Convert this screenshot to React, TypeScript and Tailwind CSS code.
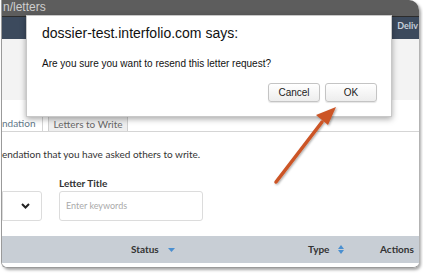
export default function App() {
  return (
    <div className="relative w-[423px] h-[274px] bg-white overflow-hidden font-['Lato',sans-serif]">
      {/* screenshot frame */}
      <div className="ml-[1px] w-[418px] h-[268px] flex flex-col overflow-hidden rounded-tr-[10px] rounded-b-[6px] border-l border-b border-[#9a9a9a] shadow-[2px_2px_3px_rgba(0,0,0,0.35)]">
        <div className="h-[16px] bg-[#5d5d5d] shrink-0 px-[1px] text-[12px] leading-[14px] text-[#cfcfcf] font-['Liberation_Sans',sans-serif]">
          n/letters
        </div>
        <div className="h-[23px] bg-[#3c4a5d] shrink-0 flex justify-end items-start pt-[2px] pr-[1px] border-t border-[#2c2c2c]">
          <span className="text-[9px] font-bold text-[#c8d0dc]">Deliv</span>
        </div>
        <div className="h-[61px] bg-[#f3f3f3] shrink-0" />
        <div className="h-[16px] bg-white shrink-0" />
        {/* tabs */}
        <div className="h-[16px] shrink-0 flex items-end border-b border-[#d5d5d5] text-[10px]">
          <div className="w-[41px] h-full bg-white border-r border-[#d5d5d5] flex items-center text-[#5f7888]">
            ndation
          </div>
          <div className="ml-[5px] w-[80px] h-full bg-[#eeeeee] border border-b-0 border-[#cfcfcf] flex items-center justify-center text-[#666]">
            Letters to Write
          </div>
        </div>
        <div className="h-[16px] shrink-0" />
        <div className="text-[10px] leading-[12px] text-[#333] h-[28px] shrink-0">
          endation that you have asked others to write.
        </div>
        <div className="flex gap-[17px] shrink-0">
          <div className="w-[40px] pt-[15px]">
            <div className="h-[30px] bg-white border border-[#dcdcdc] rounded-r-[3px] flex items-center justify-end pr-[11px]">
              <svg width="9" height="6" viewBox="0 0 9 6">
                <path d="M1 1l3.5 3.5L8 1" fill="none" stroke="#222" strokeWidth="2" />
              </svg>
            </div>
          </div>
          <div className="w-[144px]">
            <div className="h-[15px] text-[10px] font-bold text-[#333] leading-[12px] pt-[1px]">Letter Title</div>
            <div className="h-[30px] bg-white border border-[#dcdcdc] rounded-[3px] flex items-center pl-[6px] text-[9px] text-[#aaa]">
              Enter keywords
            </div>
          </div>
        </div>
        <div className="h-[15px] shrink-0" />
        <div className="h-[27px] shrink-0 bg-[#c8ced5] flex items-center pl-[129px] text-[10px] font-bold text-[#333]">
          <div className="w-[177px] flex items-center gap-[9px]">
            Status
            <svg width="7" height="4" viewBox="0 0 7 4">
              <path d="M0 0h7L3.5 4z" fill="#4a8fd0" />
            </svg>
          </div>
          <div className="w-[72px] flex items-center gap-[9px]">
            Type
            <svg width="6" height="9" viewBox="0 0 6 9">
              <path d="M0 4L3 0l3 4zM0 5l3 4 3-4z" fill="#4a8fd0" />
            </svg>
          </div>
          <div>Actions</div>
        </div>
        <div className="flex-1 bg-white" />
      </div>

      {/* alert dialog */}
      <div className="absolute left-[26px] top-[15px] w-[366px] h-[102px] bg-white shadow-[0_2px_6px_rgba(0,0,0,0.35)] border border-[#c8c8c8] font-['Liberation_Sans',sans-serif]">
        <div className="pl-[15px] pt-[9px] text-[14px] leading-[17px] text-[#111]">
          dossier-test.interfolio.com says:
        </div>
        <div className="pl-[15px] pt-[15px] text-[10px] leading-[13px] text-[#111]">
          Are you sure you want to resend this letter request?
        </div>
        <div className="flex justify-end gap-[5px] pr-[14px] pt-[13px]">
          <button className="w-[52px] h-[19px] rounded-[3px] border border-[#c4c4c4] bg-gradient-to-b from-white to-[#ededed] text-[10px] text-[#222] shadow-[0_1px_1px_rgba(0,0,0,0.1)]">
            Cancel
          </button>
          <button className="w-[52px] h-[19px] rounded-[3px] border border-[#c4c4c4] bg-gradient-to-b from-white to-[#ededed] text-[10px] text-[#222] shadow-[0_1px_1px_rgba(0,0,0,0.1)]">
            OK
          </button>
        </div>
      </div>

      {/* annotation arrow */}
      <svg className="absolute left-0 top-0 pointer-events-none" width="423" height="274">
        <defs>
          <filter id="sh" x="-20%" y="-20%" width="140%" height="140%">
            <feDropShadow dx="1" dy="1" stdDeviation="1" floodColor="#000" floodOpacity="0.35" />
          </filter>
        </defs>
        <g filter="url(#sh)">
          <line x1="276" y1="182" x2="322" y2="122" stroke="#cc5526" strokeWidth="3.5" strokeLinecap="round" />
          <path d="M336 107l-20 8 12 10z" fill="#cc5526" />
        </g>
      </svg>
    </div>
  );
}
